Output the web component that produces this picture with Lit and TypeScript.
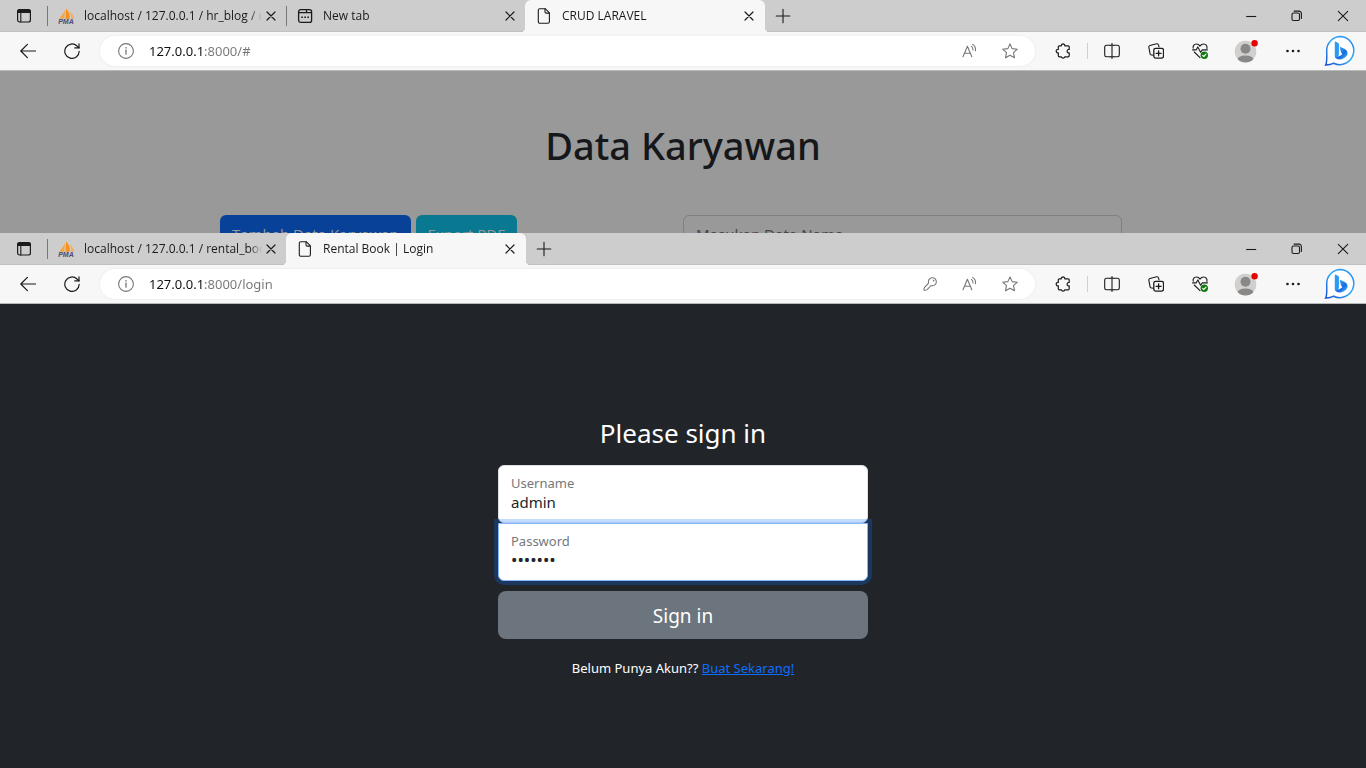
import { LitElement, html, css, svg, nothing } from "lit";
import { customElement, property } from "lit/decorators.js";
import { classMap } from "lit/directives/class-map.js";

type Tab = { title: string; icon: string; active?: boolean };

const stroke = (body: unknown, size = 16) => html`<svg
  class="icon"
  width=${size}
  height=${size}
  viewBox="0 0 ${size} ${size}"
  fill="none"
  stroke="currentColor"
  stroke-width="1.1"
  stroke-linecap="round"
  stroke-linejoin="round"
  aria-hidden="true"
>${body}</svg>`;

const icons: Record<string, unknown> = {
  workspaces: stroke(svg`<rect x="1.6" y="1.6" width="12.8" height="12.4" rx="2" stroke-width="1.2"/><path d="M1.2 5V3.2a2 2 0 0 1 2-2h9.6a2 2 0 0 1 2 2V5z" fill="currentColor" stroke="none"/><path d="M4.8 5v9"/>`),
  pma: html`<svg class="icon" width="18" height="18" viewBox="0 0 18 18" aria-hidden="true">
    <path d="M7 3 6.2 11.8 1 11.4C3.2 9.6 5.6 6.4 7 3z" fill="#f9a33c"/>
    <path d="M8 1.5c3 2.8 4.2 6 3.9 10.2L7.4 12z" fill="#f7941e"/>
    <path d="M12 4.6c2.4 2 3.8 4.4 4.4 7.2l-3.4-.2c.2-2.4-.1-4.6-1-7z" fill="#fbab55"/>
    <text x="0.2" y="17.4" font-family="Liberation Sans, sans-serif" font-size="7" font-weight="700" font-style="italic" fill="#4a4a72">PMA</text>
  </svg>`,
  newtab: stroke(svg`<rect x="1.6" y="1.6" width="13" height="12.8" rx="2.2" stroke-width="1.3"/><path d="M1.6 4.7h7l1-1V1.8M9.4 4.7h5" stroke-width="1.2"/><path d="M4.3 9.3h1.6M7.3 9.3h1.6M10.3 9.3h1.6" stroke-width="1.6" stroke-linecap="butt"/>`),
  page: stroke(svg`<path d="M3.8.7h5.4l4.2 4.2v8.9a1.5 1.5 0 0 1-1.5 1.5H3.8a1.5 1.5 0 0 1-1.5-1.5V2.2A1.5 1.5 0 0 1 3.8.7z"/><path d="M9 .9v3a1.2 1.2 0 0 0 1.2 1.2h3"/>`),
  close: stroke(svg`<path d="m2 2 8 8M10 2l-8 8" stroke-width="1.2"/>`, 12),
  plus: stroke(svg`<path d="M8 1.2v13.6M1.2 8h13.6"/>`),
  minimize: stroke(svg`<path d="M3.2 8.5h10" stroke-linecap="butt"/>`),
  restore: stroke(svg`<rect x="3" y="5" width="7.5" height="7.5" rx="1.5"/><path d="M5.1 3.1h5a2.3 2.3 0 0 1 2.3 2.3v5"/>`),
  exit: stroke(svg`<path d="m3.3 3.3 9.4 9.4M12.7 3.3l-9.4 9.4"/>`),
  back: stroke(svg`<path d="M15.5 8H.8M7.4 1.4.8 8l6.6 6.6" stroke-width="1.2"/>`),
  refresh: stroke(svg`<path d="M15.2 8.3A7.2 7.2 0 1 1 13 3l2 1.8" stroke-width="1.2"/><path d="M15 .8v4.1h-4.2" stroke-width="1.2"/>`),
  info: stroke(svg`<circle cx="8" cy="8" r="7.4"/><path d="M8 7.2v4" stroke-width="1.3"/><path d="M8 4.7v.3" stroke-width="1.5"/>`),
  key: stroke(svg`<path d="M6.6 7.1A4 4 0 1 1 9 9.5L5.2 13.6q-1.6 1-3 .6-.8-1.4.4-2.8z"/><path d="M11.6 4.6v.1" stroke-width="1.5"/>`),
  read: stroke(svg`<path d="M1 13.8 5.4 3.2l4.4 10.6M2.5 10.3h5.8"/><path d="M9.4 3.4q1.7 1.1 1.6 3.6M10.6 1.4q3.4 2 2.9 6.4" />`),
  star: stroke(svg`<path d="m8 .9 2.1 4.7 5.2.6-3.8 3.5 1 5.1L8 12.3l-4.5 2.5 1-5.1L.7 6.2l5.2-.6z"/>`),
  puzzle: stroke(svg`<path d="M4.3 2.8h2A1.9 1.9 0 0 1 8 .8a1.9 1.9 0 0 1 1.8 2h3.4a1 1 0 0 1 1 1v2.7h-.9a1.8 1.8 0 0 0 0 3.4h.9v2.9a1 1 0 0 1-1 1H9.9a1.9 1.9 0 0 1-3.6 0h-2a1 1 0 0 1-1-1V9.9A1.8 1.8 0 0 1 1.2 8a1.8 1.8 0 0 1 2.1-1.7V3.8a1 1 0 0 1 1-1z" stroke-width="1.2"/>`),
  split: stroke(svg`<path d="M6 2.3H2.4A1.7 1.7 0 0 0 .7 4v8a1.7 1.7 0 0 0 1.7 1.7H6M10 2.3h3.6A1.7 1.7 0 0 1 15.3 4v8a1.7 1.7 0 0 1-1.7 1.7H10M8 .5v15"/><path d="M6 2.3h4M6 13.7h4"/>`),
  collections: stroke(svg`<path d="M5.3 12.3 3.5 12A1.6 1.6 0 0 1 2 10.4L.8 4.2A1.6 1.6 0 0 1 2 2.5L8.6.8a1.6 1.6 0 0 1 1.9 1.1l.5 2" /><rect x="5.8" y="5.4" width="9.7" height="9.7" rx="1.8" stroke-width="1.3"/><path d="M10.6 7.8v5M8.1 10.3h5" stroke-width="1.3"/>`),
  health: stroke(svg`<path d="M1.2 5.2C.6 3.3 2 1 4.4 1 6 1 7.2 1.9 8 3.1 8.8 1.9 10 1 11.7 1c2.3 0 3.8 2.3 3.2 4.5M.6 6.9h3.5l1.7-3 2.8 5.4 1.7-2.4h5.1M2.3 9 8 14.6"/><circle cx="12.3" cy="12.3" r="3.7" fill="#107c10" stroke="none"/><path d="m10.7 12.4 1.1 1.1 2.2-2.3" stroke="#fff"/>`),
  profile: html`<svg class="icon" width="24" height="24" viewBox="0 0 24 24" aria-hidden="true">
    <defs><clipPath id="face"><circle cx="11.5" cy="12.5" r="11"/></clipPath></defs>
    <g clip-path="url(#face)"><circle cx="11.5" cy="12.5" r="11" fill="#d2d0ce"/><circle cx="11.5" cy="9.7" r="5" fill="#8a8886"/><ellipse cx="11.5" cy="21.4" rx="8.3" ry="5" fill="#8a8886"/></g>
    <circle cx="20.6" cy="4.3" r="3.2" fill="#e60000"/>
  </svg>`,
  more: html`<svg class="icon" width="16" height="16" viewBox="0 0 16 16" aria-hidden="true" fill="currentColor"><circle cx="2.5" cy="8" r="1.3"/><circle cx="8" cy="8" r="1.3"/><circle cx="13.5" cy="8" r="1.3"/></svg>`,
  bing: html`<svg class="icon" width="32" height="32" viewBox="0 0 32 32" aria-hidden="true">
    <defs>
      <linearGradient id="ring" x1="1" y1="0" x2="0" y2="1"><stop offset="0" stop-color="#2a8cf0"/><stop offset=".5" stop-color="#2fa8f5"/><stop offset="1" stop-color="#1c4fd0"/></linearGradient>
      <linearGradient id="mark" x1="0" y1="0" x2="1" y2="1"><stop offset="0" stop-color="#37bdf8"/><stop offset=".6" stop-color="#1b6be8"/><stop offset="1" stop-color="#3ec9ef"/></linearGradient>
    </defs>
    <path d="M16.5 1.6a14 14 0 1 1-6.8 26.6c-2.5 1.4-5.2 1.8-8 1.9 1.4-2.3 1.2-4.4 1-14.5A14 14 0 0 1 16.5 1.6z" fill="#fff" stroke="url(#ring)" stroke-width="1.5"/>
    <path d="M10.8 7.4c0-.7.6-1 1.2-.7l2.2 1.3c.5.3.7.7.7 1.2v10.3l-1 3.8c-2 .5-3.1-.8-3.1-2.6z" fill="#2a9af4"/>
    <path d="M16 13.2c-.3-.8.2-1.3 1-1l3.3 1.5c2.4 1.1 3.5 3 3.2 5.2-.4 2.6-5 5.7-8 5.6-2 0-4.1-1-4.6-3 2 1 3.6.2 7.5-2.3-1.3-1-1.8-3.7-2.4-6z" fill="url(#mark)"/>
  </svg>`,
};

@customElement("browser-window")
export class BrowserWindow extends LitElement {
  @property({ attribute: false }) tabs: Tab[] = [];
  @property() url = "";
  @property({ type: Boolean }) savedPassword = false;

  static styles = css`
    :host {
      display: flex;
      flex-direction: column;
      font-family: "Noto Sans", "Open Sans", sans-serif;
      color: #1b1b1b;
    }
    button {
      border: 0;
      background: none;
      padding: 0;
      margin: 0;
      color: inherit;
      font: inherit;
      display: grid;
      place-items: center;
      flex: none;
    }
    .icon { display: block; flex: none; }
    .strip {
      display: flex;
      height: 32px;
      background: #cdcdcd;
      box-shadow: inset 0 -1px 0 #c0c0c0;
    }
    .lead { width: 47px; }
    .tabs { display: flex; min-width: 0; }
    .tab {
      display: flex;
      align-items: center;
      gap: 10px;
      width: 239px;
      box-sizing: border-box;
      padding-right: 8px;
      position: relative;
      font: 12px/16px "Open Sans", "Noto Sans", sans-serif;
    }
    .tab::before {
      content: "";
      width: 1px;
      height: 20px;
      background: #777;
      flex: none;
    }
    .favicon { width: 16px; display: grid; place-items: center; flex: none; }
    .tab.active { width: 240px; padding-right: 9px; background: #f7f7f7; border-radius: 6px 6px 0 0; }
    .tab.active::before { background: none; }
    .tab.active::after {
      content: "";
      position: absolute;
      bottom: 0;
      left: -4px;
      right: -4px;
      height: 4px;
      background:
        radial-gradient(circle at 0 0, transparent 4px, #f7f7f7 4px) left / 4px 4px no-repeat,
        radial-gradient(circle at 100% 0, transparent 4px, #f7f7f7 4px) right / 4px 4px no-repeat;
    }
    .title {
      flex: 1;
      min-width: 0;
      overflow: hidden;
      white-space: nowrap;
      mask-image: linear-gradient(to right, #000 calc(100% - 12px), transparent);
    }
    .tab .close { width: 14px; height: 20px; margin-left: -8px; }
    .add { width: 36px; }
    .controls { display: flex; margin-left: auto; }
    .controls button { width: 46px; }
    .toolbar {
      display: flex;
      align-items: center;
      height: 38px;
      padding: 0 3px 0 6px;
      background: #f7f7f7;
      border-bottom: 1px solid #b8bab9;
    }
    .tool { width: 44px; height: 32px; }
    .address {
      display: flex;
      align-items: center;
      flex: 1;
      min-width: 0;
      height: 30px;
      margin: 0 6px;
      padding: 0 5px 0 6px;
      border-radius: 15px;
      background: #fff;
      box-shadow: 0 0 3px #00000012;
      color: #767676;
    }
    .address button { width: 40px; height: 30px; }
    .address input {
      flex: 1;
      min-width: 0;
      margin: 0 0 0 3px;
      padding: 0;
      border: 0;
      outline: 0;
      font: 13px/20px "Noto Sans", "Open Sans", sans-serif;
      color: transparent;
      background: linear-gradient(to right, #111 56px, #767676 56px);
      background-clip: text;
      -webkit-background-clip: text;
    }
    .rule { width: 1px; height: 16px; margin: 0 2px; background: #cfcfcf; }
    .wide { width: 47px; }
    .view { flex: 1; min-height: 0; overflow: hidden; display: flex; flex-direction: column; }
  `;

  render() {
    return html`
      <div class="strip">
        <button class="lead" aria-label="Workspaces">${icons.workspaces}</button>
        <div class="tabs">
          ${this.tabs.map(
            (t) => html`<div class=${classMap({ tab: true, active: !!t.active })}>
              <span class="favicon">${icons[t.icon]}</span>
              <span class="title">${t.title}</span>
              <button class="close" aria-label="Close tab">${icons.close}</button>
            </div>`,
          )}
        </div>
        <button class="add" aria-label="New tab">${icons.plus}</button>
        <div class="controls">
          <button aria-label="Minimize">${icons.minimize}</button>
          <button aria-label="Restore">${icons.restore}</button>
          <button aria-label="Close">${icons.exit}</button>
        </div>
      </div>
      <div class="toolbar">
        <button class="tool" aria-label="Back">${icons.back}</button>
        <button class="tool" aria-label="Refresh">${icons.refresh}</button>
        <div class="address">
          <button aria-label="Site information">${icons.info}</button>
          <input type="text" aria-label="Address" .value=${this.url} />
          ${this.savedPassword ? html`<button aria-label="Saved password">${icons.key}</button>` : nothing}
          <button aria-label="Read aloud">${icons.read}</button>
          <button aria-label="Add to favorites">${icons.star}</button>
        </div>
        <button class="tool" aria-label="Extensions">${icons.puzzle}</button>
        <span class="rule"></span>
        <button class="tool" aria-label="Split screen">${icons.split}</button>
        <button class="tool" aria-label="Collections">${icons.collections}</button>
        <button class="tool" aria-label="Browser essentials">${icons.health}</button>
        <button class="tool wide" aria-label="Profile">${icons.profile}</button>
        <button class="tool wide" aria-label="Settings and more">${icons.more}</button>
        <button class="tool wide" aria-label="Bing">${icons.bing}</button>
      </div>
      <div class="view"><slot></slot></div>
    `;
  }
}

@customElement("employee-page")
export class EmployeePage extends LitElement {
  static styles = css`
    :host {
      display: block;
      flex: 1;
      background: #999;
      padding-top: 50px;
      font: 16px/24px "Noto Sans", "Open Sans", sans-serif;
    }
    h1 {
      margin: 0 0 46px;
      font-size: 38px;
      line-height: 48px;
      font-weight: 500;
      text-align: center;
      color: #15171a;
    }
    .row {
      display: grid;
      grid-template-columns: 1fr 1fr;
      max-width: 926px;
      margin: 0 auto;
    }
    .actions { display: flex; align-items: flex-start; gap: 5px; }
    button {
      height: 38px;
      padding: 0 12px;
      border: 0;
      border-radius: 6px;
      font: 15px/24px "Open Sans", "Noto Sans", sans-serif;
      color: #999;
      background: #084298;
      white-space: nowrap;
    }
    .export { background: #087990; }
    input {
      height: 38px;
      box-sizing: border-box;
      margin-right: 24px;
      padding: 0 12px;
      border: 1px solid #7e8081;
      border-radius: 6px;
      background: #999;
      font: 15px/24px "Noto Sans", "Open Sans", sans-serif;
    }
    input::placeholder { color: #43474b; }
  `;

  render() {
    return html`
      <h1>Data Karyawan</h1>
      <div class="row">
        <div class="actions">
          <button>Tambah Data Karyawan</button>
          <button class="export">Export PDF</button>
        </div>
        <input type="search" aria-label="Masukan Data Nama" placeholder="Masukan Data Nama" />
      </div>
    `;
  }
}

@customElement("login-page")
export class LoginPage extends LitElement {
  static styles = css`
    :host {
      display: block;
      flex: 1;
      background: #212529;
      padding-top: 112px;
      font: 16px/24px "Noto Sans", "Open Sans", sans-serif;
      color: #fff;
    }
    form {
      display: flex;
      flex-direction: column;
      width: 100%;
      max-width: 370px;
      margin: 0 auto;
    }
    h1 {
      margin: 0 0 15px;
      font-size: 26px;
      line-height: 34px;
      font-weight: 400;
      text-align: center;
    }
    .field {
      display: flex;
      flex-direction: column;
      height: 58px;
      box-sizing: border-box;
      padding: 8px 12px;
      border: 1px solid #dee2e6;
      border-radius: 6px;
      background: #fff;
    }
    .focused {
      position: relative;
      border-color: #86b7fe;
      border-radius: 0 0 6px 6px;
      box-shadow: 0 0 0 4px #0d6efd40;
    }
    label { font-size: 13px; line-height: 18px; color: #75787b; }
    input {
      border: 0;
      padding: 0;
      margin: 0;
      outline: 0;
      background: none;
      height: 20px;
      font: 15px/20px "Noto Sans", "Open Sans", sans-serif;
      color: #212529;
    }
    input[type="password"] { font-size: 17px; }
    button {
      height: 48px;
      margin: 10px 0 19px;
      padding: 2px 0 0;
      border: 0;
      border-radius: 8px;
      background: #6c757d;
      color: #fff;
      font: 19px/30px "Noto Sans", "Open Sans", sans-serif;
    }
    p { margin: 0; font-size: 13px; line-height: 21px; text-align: center; }
    a { color: #0d6efd; text-decoration: underline; }
  `;

  render() {
    return html`
      <form>
        <h1>Please sign in</h1>
        <div class="field">
          <label for="username">Username</label>
          <input id="username" type="text" value="admin" />
        </div>
        <div class="field focused">
          <label for="password">Password</label>
          <input id="password" type="password" value="1234567" />
        </div>
        <button type="submit">Sign in</button>
        <p>Belum Punya Akun?? <a href="#">Buat Sekarang!</a></p>
      </form>
    `;
  }
}

@customElement("app-root")
export class AppRoot extends LitElement {
  static styles = css`
    :host {
      display: grid;
      grid-template-rows: 233px minmax(400px, 1fr);
      height: 100vh;
      overflow: hidden;
    }
    browser-window { min-height: 0; min-width: 0; overflow: hidden; }
  `;

  private employeeTabs: Tab[] = [
    { title: "localhost / 127.0.0.1 / hr_blog / u", icon: "pma" },
    { title: "New tab", icon: "newtab" },
    { title: "CRUD LARAVEL", icon: "page", active: true },
  ];

  private loginTabs: Tab[] = [
    { title: "localhost / 127.0.0.1 / rental_book", icon: "pma" },
    { title: "Rental Book | Login", icon: "page", active: true },
  ];

  render() {
    return html`
      <browser-window .tabs=${this.employeeTabs} url="127.0.0.1:8000/#">
        <employee-page></employee-page>
      </browser-window>
      <browser-window .tabs=${this.loginTabs} url="127.0.0.1:8000/login" .savedPassword=${true}>
        <login-page></login-page>
      </browser-window>
    `;
  }
}
